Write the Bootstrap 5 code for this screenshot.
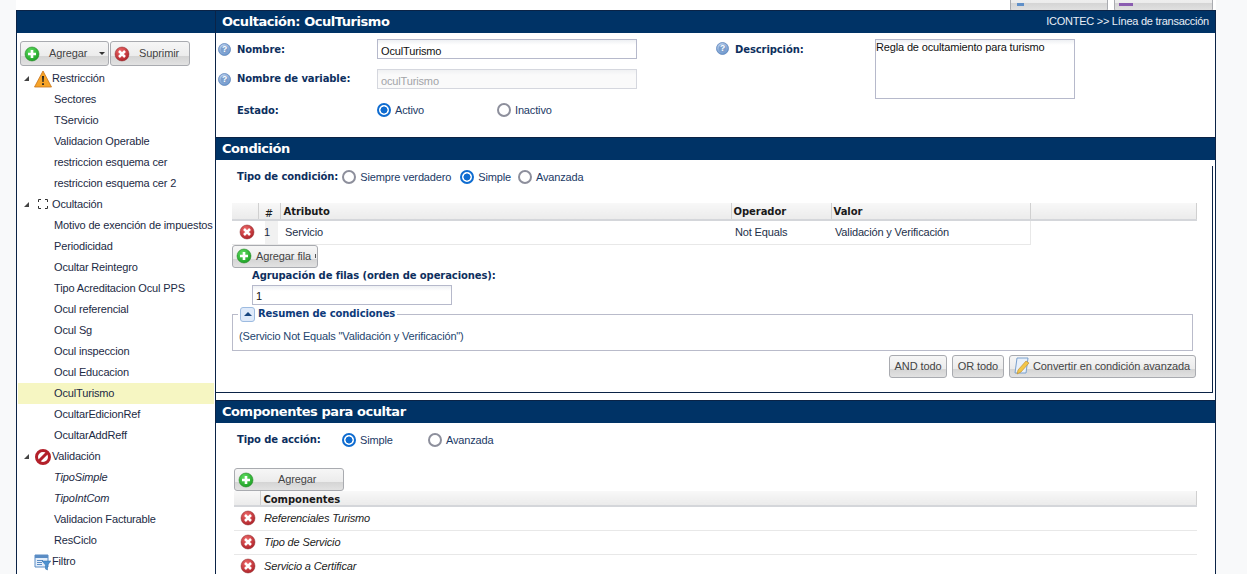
<!DOCTYPE html>
<html lang="es">
<head>
  <meta charset="UTF-8">
  <title>Ocultación: OculTurismo</title>
  <link href="https://cdn.jsdelivr.net/npm/bootstrap@5.3.3/dist/css/bootstrap.min.css" rel="stylesheet">
  <style>
    html, body { height: 574px; overflow: hidden; }
    body { background: #f8f9fa; font: 11px/1 "Liberation Sans", Arial, sans-serif; letter-spacing: -.15px; color: #1c2a44; }
    .app-frame { margin-left: 16px; width: 1200px; height: 574px; overflow: hidden; }
    .top-strip { height: 10px; background: #fff; gap: 6px; padding-right: 3px; overflow: hidden; }
    .top-btn { width: 98px; height: 18px; margin-top: -11px; flex: none; align-items: flex-start; padding: 0; }
    .top-btn + .top-btn { width: 99px; }
    .top-btn svg { margin-left: 4px; }
    .top-btn svg.ico-left { margin-left: 2px; }
    .shell { background: #fff; border: 1px solid #0b2346; border-top: 0; height: 564px; border-bottom: 0; }
    .tree-col { width: 199px; flex: none; border-right: 1px solid #0b2346; }
    .main-col { width: 999px; flex: none; }
    .hdr { background: #003366; color: #fff; height: 23px; align-items: center; border-top: 1px solid #0b2346; padding-bottom: 1px; }
    .hdr-title { font: bold 13px/1 "DejaVu Sans", sans-serif; letter-spacing: -.45px; padding-left: 6px; }
    .crumbs { margin-left: auto; padding-right: 6px; font-size: 11px; letter-spacing: -.25px; color: #e8eef6; }
    .tree-tools { padding: 8px 0 0 3px; gap: 1px; height: 35px; }
    .ux-btn { border: 1px solid #a9abb0; border-radius: 3px; color: #444; font-size: 11px; display: flex; align-items: center; padding: 0; height: 23px; letter-spacing: -.1px;
      background: linear-gradient(#f6f6f6 0, #ececec 60%, #d4d4d4 62%, #e2e2e2 100%); }
    .btn-add { width: 89px; height: 25px; padding-left: 3px; }
    .btn-del { width: 80px; height: 25px; padding-left: 3px; }
    .btn-add .ux-lbl { margin-left: 9px; }
    .btn-del .ux-lbl { margin-left: 9px; }
    .caret-dn { width: 0; height: 0; border: 3px solid transparent; border-top: 3px solid #333; border-bottom: 0; margin-left: 12px; }
    .tree { list-style: none; margin: 0; padding: 0; }
    .tree li { height: 21px; display: flex; align-items: center; white-space: nowrap; color: #1c2a44; }
    .tree .leaf { padding-left: 37px; }
    .tree .selected { background: #f6f6c2; margin: 0 1px; padding-left: 36px; }
    .tree .slanted { font-style: italic; }
    .tree .group { padding-left: 7px; }
    .arrow { height: 0; border-left: 5px solid transparent; border-bottom: 5px solid #444; width: 5px; margin-right: 5px; flex: none; }
    .noarrow { width: 10px; flex: none; }
    .grp-ico { width: 18px; height: 18px; flex: none; }
    .fld { font: bold 10px/1 "DejaVu Sans", sans-serif; color: #0d2f5e; letter-spacing: -.1px; white-space: nowrap; padding-top: 2px; }
    .help { width: 13px; height: 13px; flex: none; }
    .head-form { height: 104px; }
    .form-left { width: 500px; padding: 6px 0 0 2px; }
    .frow { display: flex; align-items: center; height: 20px; margin-bottom: 10px; }
    .frow .help { margin-right: 6px; }
    .frow:nth-child(2) .fld { padding-top: 0; }
    .flabel { width: 140px; flex: none; }
    .inp { border: 1px solid #b6b9cb; background: linear-gradient(#eef0f3 0, #fff 5px); height: 20px; width: 260px; padding: 3px 3px 0; font: 11px "Liberation Sans", sans-serif; letter-spacing: -.15px; color: #111; border-radius: 0; }
    .inp:disabled { color: #a2a4a8; border-color: #d5d7de; background: linear-gradient(#f0f1f3 0, #fafafa 5px); }
    .descr-col { padding-top: 6px; }
    .descr-lbl { width: 159px; flex: none; padding-top: 3px; }
    .descr-lbl .help { margin-right: 6px; }
    .txt { width: 200px; height: 60px; padding: 1px 0 0 0; resize: none; line-height: 1.1; display: block; }
    .opt { display: inline-flex; align-items: center; color: #1c3a66; margin: 0; padding-top: 2px; }
    .opt .form-check-input { width: 14px; height: 14px; margin: 0 4px 0 0; flex: none; border: 2px solid #8d8f9c; background: #fff; }
    .opt .form-check-input:checked { background: radial-gradient(circle, #0f6cd0 0, #0f6cd0 3.2px, #fff 3.8px); border-color: #0f6cd0; }
    .estado { margin-bottom: 0; }
    .estado .fld { padding-top: 4px; }
    .estado .opt { width: 120px; }
    .cond-panel { width: 997px; margin-top: 6px; height: 227px; border-right: 1px solid #0b2346; border-bottom: 1px solid #0b2346; }
    .cond-type { padding-left: 21px; height: 20px; }
    .cond-type .opt { margin-left: 4px; margin-right: 5px; }
    .cond-type .opt.tight-opt { margin-right: 3px; }
    .grid-wrap { margin: 17px 0 0 16px; width: 965px; }
    .gridt { table-layout: fixed; border-collapse: collapse; width: 100%; margin: 0; font-size: 11px; }
    .gridt th { height: 17px; padding: 0 4px; font: bold 10px "DejaVu Sans", sans-serif; letter-spacing: -.05px; color: #1a1a1a; background: linear-gradient(#f8f8f8, #ebebeb); border-bottom: 2px solid #d4d6da; border-right: 1px solid #d0d0d0; vertical-align: middle; }
    .gridt td { height: 24px; padding: 0 4px; color: #23304a; border-bottom: 1px solid #e8e8e8; vertical-align: middle; }
    .gridt td.nofill { border: 0; }
    .gridt td.numc { background: linear-gradient(90deg, #fff 7px, #f1f1f1 7px, #f1f1f1 20px, #fff 20px); text-align: right; padding-right: 10px; color: #1c2a44; }
    .gridt th.numc { font-weight: normal; text-align: center; padding-top: 4px; }
    .gridt td.valc { border-right: 1px solid #e8e8e8; }
    .gridt .xc { padding: 0 0 0 7px; }
    .gridt td.attr { padding-left: 5px; }
    .gridt th.attrh { padding-left: 3px; }
    .gridt th.tight { padding-left: 2px; }
    .c-x { width: 26px; }
    .c-num { width: 22px; }
    .c-attr { width: 451px; }
    .c-op { width: 100px; }
    .c-val { width: 199px; }
    .x-ico { width: 16px; height: 16px; display: inline-block; vertical-align: middle; }
    .btn-row { width: 86px; height: 23px; margin: 0 0 0 16px; padding-left: 3px; }
    .btn-row .ux-lbl { margin-left: 4px; }
    .btn-row .tick { width: 1px; height: 4px; background: #555; margin-left: auto; margin-right: 1px; }
    .grp-label { margin: 1px 0 0 36px; display: block; }
    .grp-inp { width: 200px; margin: 4px 0 0 36px; display: block; }
    .summary { margin: 9px 0 0 16px; width: 961px; height: 37px; border: 1px solid #b9bbca; position: relative; padding: 16px 0 0 6px; color: #23456e; }
    .summary-head { position: absolute; left: 5px; top: -8px; background: #fff; padding: 0 2px; display: flex; align-items: center; gap: 3px; color: #0d3a7a; }
    .toggle { width: 15px; height: 15px; border: 1px solid #9dbbe0; border-radius: 3px; background: #dfeafa; display: flex; align-items: center; justify-content: center; }
    .toggle i { width: 0; height: 0; border: 4px solid transparent; border-bottom: 4px solid #17457f; border-top: 0; }
    .act-row { margin: 4px 16px 0 0; gap: 5px; justify-content: flex-end; }
    .act-row .ux-btn { height: 23px; justify-content: center; }
    .b-and { width: 58px; }
    .b-or { width: 52px; }
    .act-row .b-conv { width: 187px; justify-content: flex-start; padding-left: 2px; }
    .note-ico { width: 19px; height: 19px; margin-right: 2px; flex: none; }
    .act-type { padding-left: 21px; height: 32px; align-items: center; }
    .act-type .opt { width: 86px; }
    .act-type .fld { width: 105px; }
    .btn-comp { width: 110px; height: 23px; margin: 13px 0 0 18px; padding-left: 3px; }
    .btn-comp .ux-lbl { margin-left: 24px; }
    .comp-wrap { margin: 0 0 0 18px; width: 963px; }
    .comp-wrap td { font-style: italic; color: #222; }
    .comp-wrap th { height: 15px; }
    .comp-wrap .xc { padding-left: 6px; }
    .comp-wrap th.padc { padding: 3px 0 0 3px; }
    .gap-sep { height: 7px; }
  </style>
</head>
<body>
  <svg width="0" height="0" class="d-block position-absolute">
    <defs>
      <radialGradient id="gGreen" cx=".4" cy=".3" r=".8"><stop offset="0" stop-color="#5fdc5f"/><stop offset="1" stop-color="#159a1f"/></radialGradient>
      <radialGradient id="gRed" cx=".4" cy=".3" r=".8"><stop offset="0" stop-color="#ee6a6a"/><stop offset="1" stop-color="#a81a22"/></radialGradient>
      <radialGradient id="gBlue" cx=".4" cy=".3" r=".8"><stop offset="0" stop-color="#c8d8f0"/><stop offset="1" stop-color="#5c8cc8"/></radialGradient>
      <symbol id="i-plus" viewBox="0 0 16 16"><circle cx="8" cy="8" r="7" fill="url(#gGreen)" stroke="#2a8a2a" stroke-width=".6"/><path d="M8 4v8M4 8h8" stroke="#fff" stroke-width="2.6"/></symbol>
      <symbol id="i-x" viewBox="0 0 16 16"><circle cx="8" cy="8" r="7" fill="url(#gRed)" stroke="#8c2a2a" stroke-width=".5"/><path d="M5 5l6 6M11 5l-6 6" stroke="#fff" stroke-width="2.5"/></symbol>
      <symbol id="i-help" viewBox="0 0 13 13"><circle cx="6.5" cy="6.5" r="6" fill="url(#gBlue)" stroke="#5f86bb" stroke-width=".8"/><circle cx="6.5" cy="6.5" r="3.8" fill="#7d9fcd"/><text x="6.5" y="9.4" text-anchor="middle" font-family="Liberation Sans" font-weight="bold" font-size="8.5" fill="#fff">?</text></symbol>
    </defs>
  </svg>

  <div class="app-frame">
    <div class="top-strip d-flex justify-content-end">
      <div class="ux-btn top-btn"><svg width="14" height="13" class="ico-left"><path d="M4 9h7v3H4z" fill="#5f8fc8"/></svg></div>
      <div class="ux-btn top-btn"><svg width="14" height="13"><path d="M0 9h14v3H0z" fill="#8a5cb0"/></svg></div>
    </div>
    <div class="shell d-flex">
      <div class="tree-col">
        <div class="hdr d-flex"></div>
        <div class="tree-tools d-flex">
          <button type="button" class="ux-btn btn-add"><svg width="16" height="16"><use href="#i-plus"/></svg><span class="ux-lbl">Agregar</span><span class="caret-dn"></span></button>
          <button type="button" class="ux-btn btn-del"><svg width="16" height="16"><use href="#i-x"/></svg><span class="ux-lbl">Suprimir</span></button>
        </div>
        <ul class="tree">
          <li class="group"><span class="arrow"></span><svg class="grp-ico" viewBox="0 0 18 18"><path d="M9 1L17.5 17H.5z" fill="#f7a428" stroke="#c8741a" stroke-width=".8"/><path d="M8 6h2l-.4 6h-1.2zM8.1 13.2h1.8V15H8.1z" fill="#222"/></svg>Restricción</li>
          <li class="leaf">Sectores</li>
          <li class="leaf">TServicio</li>
          <li class="leaf">Validacion Operable</li>
          <li class="leaf">restriccion esquema cer</li>
          <li class="leaf">restriccion esquema cer 2</li>
          <li class="group"><span class="arrow"></span><svg class="grp-ico" viewBox="0 0 18 18"><path d="M4.500 6V3.500H7M11 3.500h2.500V6M13.500 10v2.500H11M7 12.500H4.500V10" fill="none" stroke="#333" stroke-width="1"/></svg>Ocultación</li>
          <li class="leaf">Motivo de exención de impuestos</li>
          <li class="leaf">Periodicidad</li>
          <li class="leaf">Ocultar Reintegro</li>
          <li class="leaf">Tipo Acreditacion Ocul PPS</li>
          <li class="leaf">Ocul referencial</li>
          <li class="leaf">Ocul Sg</li>
          <li class="leaf">Ocul inspeccion</li>
          <li class="leaf">Ocul Educacion</li>
          <li class="leaf selected">OculTurismo</li>
          <li class="leaf">OcultarEdicionRef</li>
          <li class="leaf">OcultarAddReff</li>
          <li class="group"><span class="arrow"></span><svg class="grp-ico" viewBox="0 0 18 18"><circle cx="9" cy="9" r="6.500" fill="#fff" stroke="#b3202a" stroke-width="3"/><path d="M13.500 4.500l-9 9" stroke="#b3202a" stroke-width="3"/></svg>Validación</li>
          <li class="leaf slanted">TipoSimple</li>
          <li class="leaf slanted">TipoIntCom</li>
          <li class="leaf">Validacion Facturable</li>
          <li class="leaf">ResCiclo</li>
          <li class="group"><span class="noarrow"></span><svg class="grp-ico" viewBox="0 0 18 18"><path d="M1 2h13v12H1z" fill="#e4eefa" stroke="#5a8cc4"/><path d="M1 2h13v3H1z" fill="#5a8cc4"/><path d="M3 7.500h6M3 9.500h5M3 11.500h5" stroke="#5a8cc4"/><path d="M8 8h9l-3.500 4v5l-2-1v-4z" fill="#4d92d0" stroke="#2f6ca8" stroke-width=".5"/></svg>Filtro</li>
        </ul>
      </div>

      <div class="main-col">
        <div class="hdr d-flex">
          <span class="hdr-title">Ocultación: OculTurismo</span>
          <span class="crumbs">ICONTEC &gt;&gt; Línea de transacción</span>
        </div>
        <div class="head-form d-flex">
          <div class="form-left">
            <div class="frow"><svg class="help"><use href="#i-help"/></svg><span class="fld flabel">Nombre:</span><input class="inp" type="text" value="OculTurismo"></div>
            <div class="frow"><svg class="help"><use href="#i-help"/></svg><span class="fld flabel">Nombre de variable:</span><input class="inp" type="text" value="oculTurismo" disabled></div>
            <div class="frow estado"><span class="help"></span><span class="fld flabel">Estado:</span>
              <label class="opt"><input class="form-check-input" type="radio" name="estado" checked>Activo</label>
              <label class="opt"><input class="form-check-input" type="radio" name="estado">Inactivo</label>
            </div>
          </div>
          <div class="d-flex align-items-start descr-col">
            <div class="d-flex align-items-center descr-lbl"><svg class="help"><use href="#i-help"/></svg><span class="fld">Descripción:</span></div>
            <textarea class="inp txt">Regla de ocultamiento para turismo</textarea>
          </div>
        </div>

        <div class="hdr d-flex"><span class="hdr-title">Condición</span></div>
        <div class="cond-panel">
          <div class="cond-type d-flex align-items-center">
            <span class="fld">Tipo de condición:</span>
            <label class="opt"><input class="form-check-input" type="radio" name="tipo">Siempre verdadero</label>
            <label class="opt tight-opt"><input class="form-check-input" type="radio" name="tipo" checked>Simple</label>
            <label class="opt"><input class="form-check-input" type="radio" name="tipo">Avanzada</label>
          </div>
          <div class="grid-wrap">
            <table class="gridt">
              <colgroup><col class="c-x"><col class="c-num"><col class="c-attr"><col class="c-op"><col class="c-val"><col></colgroup>
              <thead><tr><th></th><th class="numc">#</th><th class="attrh">Atributo</th><th class="tight">Operador</th><th class="tight">Valor</th><th></th></tr></thead>
              <tbody><tr><td class="xc"><svg class="x-ico"><use href="#i-x"/></svg></td><td class="numc">1</td><td class="attr">Servicio</td><td>Not Equals</td><td class="valc">Validación y Verificación</td><td class="nofill"></td></tr></tbody>
            </table>
          </div>
          <button type="button" class="ux-btn btn-row"><svg width="16" height="16"><use href="#i-plus"/></svg><span class="ux-lbl">Agregar fila</span><span class="tick"></span></button>
          <span class="fld grp-label">Agrupación de filas (orden de operaciones):</span>
          <input class="inp grp-inp" type="text" value="1">
          <div class="summary">
            <div class="summary-head fld"><span class="toggle"><i></i></span>Resumen de condiciones</div>
            (Servicio Not Equals "Validación y Verificación")
          </div>
          <div class="act-row d-flex">
            <button type="button" class="ux-btn b-and">AND todo</button>
            <button type="button" class="ux-btn b-or">OR todo</button>
            <button type="button" class="ux-btn b-conv"><svg class="note-ico" viewBox="0 0 19 19"><path d="M5 1h11l-2 15H3z" fill="#e8f0fa" stroke="#7aa0cc"/><path d="M5 17l1-4 8-9 3 2-8 9z" fill="#f3c648" stroke="#b8862a" stroke-width=".6"/></svg>Convertir en condición avanzada</button>
          </div>
        </div>
        <div class="gap-sep"></div>
        <div class="hdr d-flex"><span class="hdr-title">Componentes para ocultar</span></div>
        <div class="act-type d-flex">
          <span class="fld">Tipo de acción:</span>
          <label class="opt"><input class="form-check-input" type="radio" name="accion" checked>Simple</label>
          <label class="opt"><input class="form-check-input" type="radio" name="accion">Avanzada</label>
        </div>
        <button type="button" class="ux-btn btn-comp"><svg width="16" height="16"><use href="#i-plus"/></svg><span class="ux-lbl">Agregar</span></button>
        <div class="comp-wrap">
          <table class="gridt">
            <colgroup><col class="c-x"><col></colgroup>
            <thead><tr><th></th><th class="padc">Componentes</th></tr></thead>
            <tbody>
              <tr><td class="xc"><svg class="x-ico"><use href="#i-x"/></svg></td><td>Referenciales Turismo</td></tr>
              <tr><td class="xc"><svg class="x-ico"><use href="#i-x"/></svg></td><td>Tipo de Servicio</td></tr>
              <tr><td class="xc"><svg class="x-ico"><use href="#i-x"/></svg></td><td>Servicio a Certificar</td></tr>
            </tbody>
          </table>
        </div>
      </div>
    </div>
  </div>
  <script src="https://cdn.jsdelivr.net/npm/bootstrap@5.3.3/dist/js/bootstrap.bundle.min.js"></script>
</body>
</html>
